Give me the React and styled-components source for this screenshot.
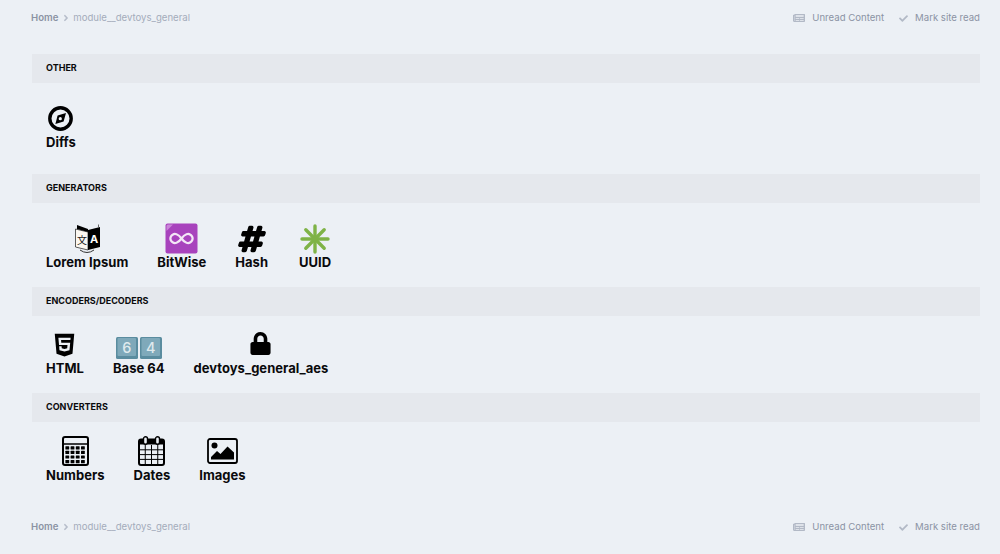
import React from 'react'
import styled, { createGlobalStyle } from 'styled-components'
import { FaAngleRight, FaCheck, FaHashtag, FaHtml5, FaLock, FaNewspaper } from 'react-icons/fa'

const GlobalStyle = createGlobalStyle`
  html, body {
    margin: 0;
    background: #ecf0f5;
    font-family: Inter, "Liberation Sans", sans-serif;
  }
`

const KeyPair = styled.div`
  display: flex;
  gap: 2px;
  margin-bottom: -1px;
`

const StarSvg = styled.svg`
  margin: 0 3px;
`

const HeavyHash = styled(FaHashtag)`
  stroke: currentColor;
  stroke-width: 34px;
  transform: skewX(-6deg);
`

const WideHtml = styled(FaHtml5)`
  width: 23px;
  height: 26px;
`

function CompassIcon() {
  return (
    <svg width="25" height="25" viewBox="0 0 25 25">
      <circle cx="12.5" cy="12.5" r="10.7" fill="none" stroke="#000" strokeWidth="3.4" />
      <path d="M18 7 L15.6 15.6 L7.4 18 L9.6 9.6 Z" fill="#000" />
      <circle cx="12.3" cy="12.7" r="1.6" fill="#ecf0f5" />
    </svg>
  )
}

function TranslateIcon() {
  return (
    <svg width="30" height="30" viewBox="0 0 30 30">
      <path d="M3.5 5 L16 8 L16 26 L3.5 23 Z" fill="#fbf7f0" stroke="#333" strokeWidth="0.8" />
      <path d="M16 6 L28 3 L28 23 L16 26 Z" fill="#000" />
      <path d="M5 1 L16 5 L16 8 L5 5 Z" fill="#000" />
      <path d="M26 0.5 L27 0.5 L27 3 L26 3.5 Z" fill="#666" />
      <text x="5" y="20" fontSize="10" fill="#222" fontFamily="Noto Sans CJK JP, sans-serif">文</text>
      <text x="18" y="19" fontSize="11" fontWeight="700" fill="#fff" fontFamily="Inter, sans-serif">A</text>
      <path d="M8 26 Q15 31 22 26" fill="none" stroke="#333" strokeWidth="1" />
    </svg>
  )
}

function InfinityIcon() {
  return (
    <svg width="33" height="31" viewBox="0 0 33 31">
      <rect x="0.5" y="0.5" width="32" height="30" rx="2" fill="#a843bd" />
      <path d="M1.5 8 V3 Q1.5 1.5 3 1.5 H8 Z" fill="#c985d8" />
      <path d="M16.5 15.5 C13 10.5 9.5 10.5 8 11.5 C4.5 13.5 4.5 17.5 8 19.5 C9.5 20.5 13 20.5 16.5 15.5 C20 10.5 23.5 10.5 25 11.5 C28.5 13.5 28.5 17.5 25 19.5 C23.5 20.5 20 20.5 16.5 15.5 Z" fill="none" stroke="#f3e6f6" strokeWidth="2.2" />
    </svg>
  )
}

function StarIcon() {
  return (
    <StarSvg width="30" height="30" viewBox="0 0 30 30">
      <g stroke="#7fb347" strokeWidth="3.4" strokeLinecap="round">
        <line x1="15" y1="2" x2="15" y2="28" />
        <line x1="2" y1="15" x2="28" y2="15" />
        <line x1="5.8" y1="5.8" x2="24.2" y2="24.2" />
        <line x1="24.2" y1="5.8" x2="5.8" y2="24.2" />
      </g>
    </StarSvg>
  )
}

function KeycapIcon({ digit }) {
  return (
    <svg width="22" height="22" viewBox="0 0 22 22">
      <rect width="22" height="22" rx="1.5" fill="#5a8c9f" />
      <rect x="1.5" y="1" width="18.5" height="18" rx="1" fill="#7fa9ba" />
      <text x="10.7" y="15.5" textAnchor="middle" fontSize="14.5" fontWeight="500" fill="#dfe9ed" fontFamily="Inter, sans-serif">{digit}</text>
    </svg>
  )
}

function CalculatorIcon() {
  const cells = []
  for (let r = 0; r < 4; r++) {
    for (let c = 0; c < 4; c++) {
      cells.push(<rect key={r + '-' + c} x={3.4 + c * 5.2} y={10.2 + r * 4.6} width="3.8" height="3.2" rx="0.5" fill="#000" />)
    }
  }
  return (
    <svg width="27" height="30" viewBox="0 0 27 30">
      <rect x="1" y="1" width="25" height="28" rx="2" fill="none" stroke="#000" strokeWidth="2" />
      <line x1="1" y1="8" x2="26" y2="8" stroke="#000" strokeWidth="1.5" />
      {cells}
    </svg>
  )
}

function CalendarIcon() {
  const lines = []
  for (let i = 1; i < 4; i++) {
    lines.push(<line key={'v' + i} x1={1 + i * 6.25} y1="9" x2={1 + i * 6.25} y2="28" stroke="#000" strokeWidth="1" />)
    lines.push(<line key={'h' + i} x1="1" y1={9 + i * 4.8} x2="26" y2={9 + i * 4.8} stroke="#000" strokeWidth="1" />)
  }
  return (
    <svg width="27" height="30" viewBox="0 0 27 30">
      <rect x="1" y="3.5" width="25" height="25.5" rx="2" fill="none" stroke="#000" strokeWidth="2" />
      <path d="M1 4 H26 V8.5 H1 Z" fill="#000" />
      {lines}
      <rect x="5.5" y="0.8" width="4" height="7.5" rx="2" fill="#ecf0f5" stroke="#000" strokeWidth="1.4" />
      <rect x="17.5" y="0.8" width="4" height="7.5" rx="2" fill="#ecf0f5" stroke="#000" strokeWidth="1.4" />
    </svg>
  )
}

function PictureIcon() {
  return (
    <svg width="31" height="26" viewBox="0 0 31 26">
      <rect x="1" y="1" width="29" height="24" rx="2" fill="none" stroke="#000" strokeWidth="1.8" />
      <circle cx="7.5" cy="7.5" r="3" fill="#000" />
      <path d="M4 21.5 V19 L10 13 L13.5 16 L20.5 8.5 L27 14.5 V21.5 Z" fill="#000" />
    </svg>
  )
}

const sections = [
  {
    title: 'Other', top: 23, gap: 3, bottom: 24, items: [
      { label: 'Diffs', icon: <CompassIcon /> },
    ],
  },
  {
    title: 'Generators', top: 20, gap: 0, bottom: 17, items: [
      { label: 'Lorem Ipsum', icon: <TranslateIcon /> },
      { label: 'BitWise', icon: <InfinityIcon /> },
      { label: 'Hash', icon: <HeavyHash size={28} /> },
      { label: 'UUID', icon: <StarIcon /> },
    ],
  },
  {
    title: 'Encoders/Decoders', top: 16, gap: 2, bottom: 17, items: [
      { label: 'HTML', icon: <WideHtml /> },
      { label: 'Base 64', align: 'flex-end', icon: <KeyPair><KeycapIcon digit="6" /><KeycapIcon digit="4" /></KeyPair> },
      { label: 'devtoys_general_aes', align: 'flex-start', icon: <FaLock size={23} /> },
    ],
  },
  {
    title: 'Converters', top: 14, gap: 1, bottom: 0, items: [
      { label: 'Numbers', icon: <CalculatorIcon /> },
      { label: 'Dates', icon: <CalendarIcon /> },
      { label: 'Images', icon: <PictureIcon /> },
    ],
  },
]

function Breadcrumb() {
  return (
    <Crumbs>
      <Trail>
        <Home>Home</Home>
        <Chevron><FaAngleRight size={10} /></Chevron>
        <Current>module__devtoys_general</Current>
      </Trail>
      <Actions>
        <Action><FaNewspaper size={12} /> Unread Content</Action>
        <Action><FaCheck size={9} /> Mark site read</Action>
      </Actions>
    </Crumbs>
  )
}

export default function App() {
  return (
    <Page>
      <GlobalStyle />
      <Breadcrumb />
      <Main>
        {sections.map((s) => (
          <section key={s.title}>
            <SectionTitle>{s.title}</SectionTitle>
            <Row $top={s.top} $bottom={s.bottom}>
              {s.items.map((item) => (
                <Item key={item.label} $gap={s.gap}>
                  <IconSlot $align={item.align}>{item.icon}</IconSlot>
                  <Label>{item.label}</Label>
                </Item>
              ))}
            </Row>
          </section>
        ))}
      </Main>
      <FooterCrumbs>
        <Breadcrumb />
      </FooterCrumbs>
    </Page>
  )
}

const Page = styled.div`
  height: 554px;
  overflow: hidden;
  padding: 11px 20px 0 32px;
  box-sizing: border-box;
  display: flex;
  flex-direction: column;
`

const Crumbs = styled.div`
  display: flex;
  justify-content: space-between;
  align-items: center;
  height: 14px;
  font-size: 9.6px;
  line-height: 14px;
`

const Trail = styled.div`
  display: flex;
  align-items: center;
  margin-left: -1px;
`

const Home = styled.span`
  color: #8b93a4;
  font-weight: 600;
`

const Chevron = styled.span`
  display: flex;
  width: 15px;
  justify-content: center;
  color: #b6bdca;
`

const Current = styled.span`
  color: #a4acbb;
`

const Actions = styled.div`
  display: flex;
  gap: 15px;
`

const Action = styled.span`
  display: flex;
  align-items: center;
  gap: 7px;
  color: #8b93a4;
  svg { color: #b2b9c6; }
`

const Main = styled.main`
  margin-top: 29px;
`

const SectionTitle = styled.h2`
  margin: 0;
  height: 29px;
  padding-left: 14px;
  background: #e5e8ed;
  color: #0a0a0c;
  font-size: 9px;
  font-weight: 700;
  line-height: 28px;
  text-transform: uppercase;
`

const Row = styled.div`
  display: flex;
  gap: 29px;
  padding: ${(p) => p.$top}px 14px ${(p) => p.$bottom}px;
`

const Item = styled.div`
  display: flex;
  flex-direction: column;
  align-items: center;
  gap: ${(p) => p.$gap}px;
  color: #000;
`

const IconSlot = styled.div`
  flex: 1;
  display: flex;
  align-items: ${(p) => p.$align || 'center'};
  justify-content: center;
`

const Label = styled.span`
  color: #0a0a0c;
  font-size: 13px;
  font-weight: 700;
  line-height: 16px;
  letter-spacing: 0.02px;
  white-space: nowrap;
`

const FooterCrumbs = styled.div`
  margin-top: auto;
  padding-bottom: 20px;
`
